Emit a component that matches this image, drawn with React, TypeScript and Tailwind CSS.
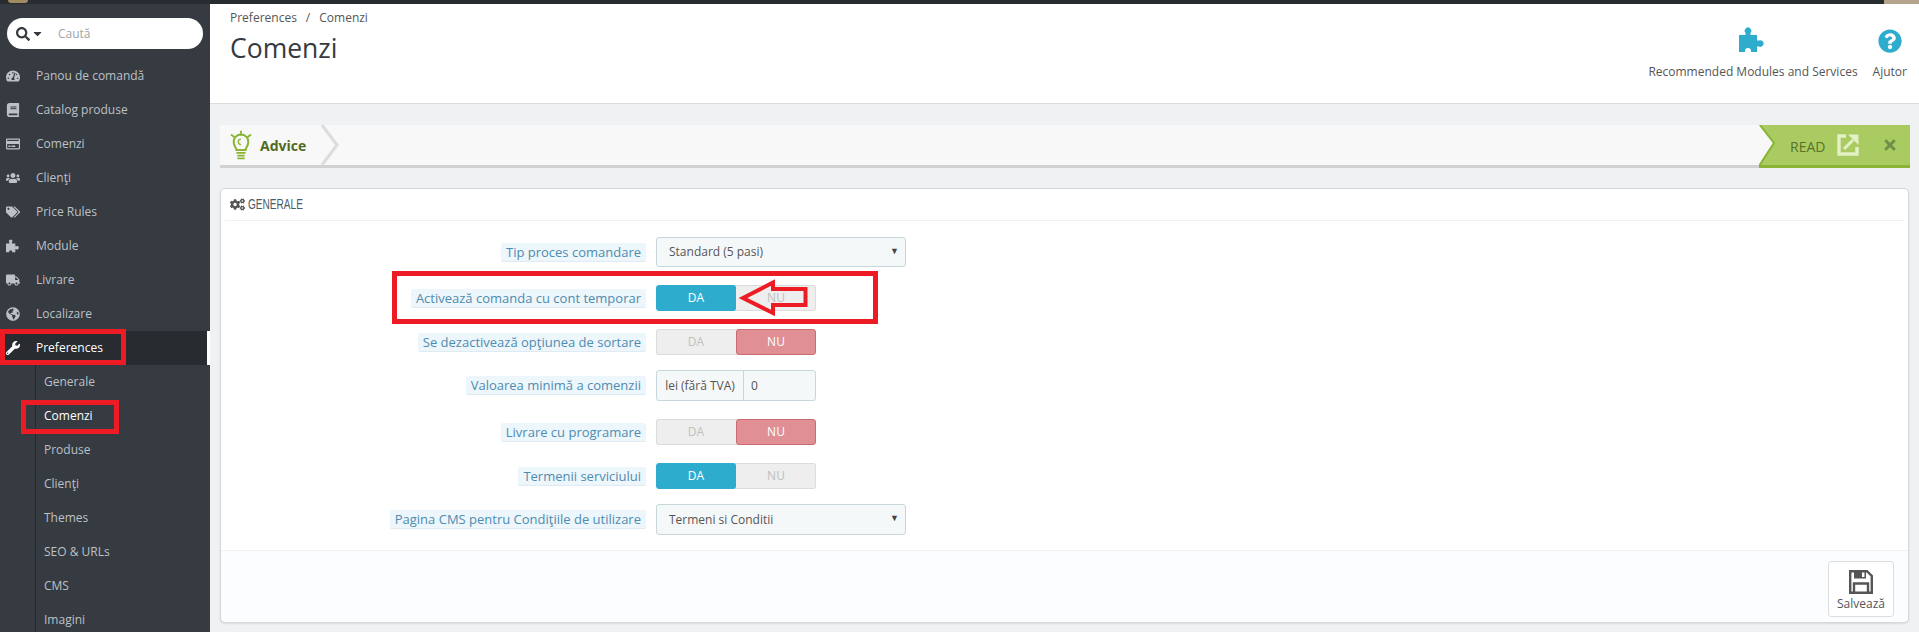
import type { ReactNode } from "react";
import {
  FaBook,
  FaCaretDown,
  FaCogs,
  FaGlobeAmericas,
  FaQuestionCircle,
  FaRegCreditCard,
  FaSearch,
  FaTachometerAlt,
  FaTags,
  FaTimes,
  FaTruck,
  FaUsers,
  FaWrench,
} from "react-icons/fa";

function Puzzle({ className }: { className: string }) {
  return (
    <svg viewBox="0 0 27 26" className={className} fill="currentColor">
      <path d="M0 8H6.5V6A3.3 3.3 0 1 1 11.5 6V8H18V13.5H20A3.3 3.3 0 1 1 20 19.5H18V25H12V24A3 3 0 0 0 6 24V25H0Z" />
    </svg>
  );
}

const menu = [
  { label: "Panou de comandă", icon: <FaTachometerAlt /> },
  { label: "Catalog produse", icon: <FaBook /> },
  { label: "Comenzi", icon: <FaRegCreditCard /> },
  { label: "Clienţi", icon: <FaUsers /> },
  { label: "Price Rules", icon: <FaTags /> },
  { label: "Module", icon: <Puzzle className="h-[14px] w-[14px]" /> },
  { label: "Livrare", icon: <FaTruck /> },
  { label: "Localizare", icon: <FaGlobeAmericas /> },
];

const submenu = ["Generale", "Comenzi", "Produse", "Clienţi", "Themes", "SEO & URLs", "CMS", "Imagini"];

function Sidebar() {
  return (
    <aside className="relative w-[210px] shrink-0 bg-[#363a41] text-[12px]">
      {/* Cautare */}
      <div className="mx-[7px] mt-[14px] mb-[10px] flex h-[31px] w-[196px] items-center rounded-full bg-white pl-[9px] text-[#363a41]">
        <FaSearch className="text-[14px]" />
        <FaCaretDown className="ml-[1px] text-[13px]" />
        <span className="ml-[14px] text-[#a0a5a8]">Caută</span>
      </div>

      {menu.map((item) => (
        <div key={item.label} className="flex h-[34px] items-center text-[#bcc1c7]">
          <span className="flex w-[36px] justify-center pr-[10px] text-[14px]">{item.icon}</span>
          {item.label}
        </div>
      ))}

      <div className="flex h-[34px] items-center border-r-[3px] border-white bg-[#282b30] text-white">
        <span className="flex w-[36px] justify-center pr-[10px] text-[14px]">
          <FaWrench />
        </span>
        Preferences
      </div>

      <div className="ml-[35px] border-l border-[#25282c] pl-[8px]">
        {submenu.map((name) => (
          <div key={name} className={`flex h-[34px] items-center ${name === "Comenzi" ? "text-white" : "text-[#bcc1c7]"}`}>
            {name}
          </div>
        ))}
      </div>

      {/* Marcaje rosii */}
      <div className="absolute top-[325px] left-0 h-[36px] w-[126px] border-[5px] border-[#ed1c24]" />
      <div className="absolute top-[396px] left-[21px] h-[34px] w-[98px] border-[5px] border-[#ed1c24]" />
    </aside>
  );
}

function Header() {
  return (
    <header className="flex h-[100px] shrink-0 justify-between border-b border-[#d9dbdd] bg-white pr-[12px] pl-[20px] text-[#555]">
      <div>
        <div className="mt-[5px] text-[12px] leading-[18px] text-[#555]">
          Preferences<span className="mx-[9px]">/</span>Comenzi
        </div>
        <h1 className="mt-[3px] text-[26.5px] leading-[36px] font-normal text-[#363a41]">Comenzi</h1>
      </div>
      <div className="mt-[23px] flex gap-[15px] text-[12px]">
        <div className="flex flex-col items-center">
          <Puzzle className="h-[26px] w-[27px] text-[#2eacce]" />
          <span className="mt-[10px]">Recommended Modules and Services</span>
        </div>
        <div className="flex flex-col items-center">
          <FaQuestionCircle className="mt-[2px] h-[24px] w-[24px] text-[#2eacce]" />
          <span className="mt-[10px]">Ajutor</span>
        </div>
      </div>
    </header>
  );
}

function Bulb() {
  return (
    <svg viewBox="0 0 24 32" className="h-[31px] w-[22px]" fill="none" stroke="#8ab534">
      <path d="M12 0v5M1 4l4 3M23 4l-4 3" strokeWidth="2" />
      <path d="M7 21c0-3-3-4-3-9a8 8 0 0 1 16 0c0 5-3 6-3 9z" strokeWidth="2.2" />
      <path d="M12 9a3 3 0 0 0 0 6" strokeWidth="1.5" />
      <path d="M7 24h10M8 27h8M8 30h8" strokeWidth="2" />
    </svg>
  );
}

function ReadIcon() {
  return (
    <svg viewBox="0 0 22 22" className="h-[22px] w-[22px]" fill="none" stroke="#e4f0c6">
      <path d="M9 2H2v18h18v-7" strokeWidth="3.4" />
      <path d="M7 15l9-9" strokeWidth="3" />
      <path d="M11 0.5H21.5V11Z" fill="#e4f0c6" stroke="none" />
    </svg>
  );
}

function SaveIcon() {
  return (
    <svg viewBox="0 0 24 24" className="h-[24px] w-[24px] text-[#555]" fill="none" stroke="currentColor">
      <path d="M1.2 1.2H18L22.8 6V22.8H1.2Z" strokeWidth="2.4" />
      <path d="M5 1.5H17V8.5H5Z" fill="currentColor" stroke="none" />
      <path d="M13 2.5H15.5V7H13Z" fill="white" stroke="none" />
      <path d="M5 22V13.5H19V22" strokeWidth="2.4" />
    </svg>
  );
}

function AdviceBar() {
  return (
    <div className="mt-[21px] mr-[9px] ml-[10px] flex h-[43px] border-b-[3px] border-[#d1d1d1] bg-[#f8f8f8]">
      <div className="flex items-center pl-[10px]">
        <Bulb />
        <span className="ml-[8px] text-[14px] font-bold text-[#4f6b1f]">Advice</span>
        <svg viewBox="0 0 18 40" className="ml-[15px] h-[40px] w-[18px]" fill="none" stroke="#dcdcdc" strokeWidth="3">
          <path d="M1 0l15 20L1 40" />
        </svg>
      </div>
      <div className="relative -mb-[3px] ml-auto flex w-[151px] items-center border-b-[3px] border-[#8ab534] bg-[#a9cb62] pt-[3px] pl-[31px] text-[#5a7329]">
        <svg viewBox="0 0 16 43" className="absolute top-0 left-0 h-[43px] w-[16px]" fill="#f8f8f8" stroke="#8ab534" strokeWidth="2">
          <path d="M0 0l14 18L0 40z" stroke="none" />
          <path d="M1 0l14 18L0 41" fill="none" />
        </svg>
        <span className="text-[14px]">READ</span>
        <span className="ml-[12px] -mt-[4px]">
          <ReadIcon />
        </span>
        <FaTimes className="ml-[23px] -mt-[4px] h-[16px] w-[16px] text-[#6f8f47]" />
      </div>
    </div>
  );
}

function Field({ label, children, height, mt }: { label: string; children: ReactNode; height: string; mt: string }) {
  return (
    <div className={`flex items-center gap-[10px] ${height} ${mt}`}>
      <div className="flex w-[425px] shrink-0 justify-end">
        <span className="rounded-[2px] border-b border-[#dfeaf2] bg-[#edf6fb] px-[5px] text-[13px] leading-[18px] text-[#4d8cb0]">{label}</span>
      </div>
      {children}
    </div>
  );
}

function Toggle({ on }: { on: boolean }) {
  return (
    <div className="flex h-[26px] w-[160px] overflow-hidden rounded-[3px] bg-[#eeeeee] text-[12px] shadow-[inset_0_0_0_1px_#dcdcdc]">
      <div className={`flex w-[80px] items-center justify-center rounded-[3px] ${on ? "bg-[#2eacce] text-white" : "text-[#c0c0c0]"}`}>
        DA
      </div>
      <div className={`flex flex-1 items-center justify-center rounded-[3px] ${on ? "text-[#c0c0c0]" : "border border-[#c96b6f] bg-[#e08f95] text-white"}`}>
        NU
      </div>
    </div>
  );
}

function SelectBox({ value }: { value: string }) {
  return (
    <div className="flex h-full w-[250px] items-center justify-between rounded-[3px] border border-[#c7d6db] bg-[#f5f8f9] pr-[6px] pl-[12px] text-[12px] text-[#555]">
      {value}
      <span className="mb-[4px] text-[9px] leading-none text-[#444]">▼</span>
    </div>
  );
}

function Panel() {
  return (
    <section className="relative mx-[10px] mt-[20px] h-[435px] rounded-[5px] border border-[#d3d8db] bg-white shadow-[0_1px_2px_rgba(0,0,0,0.1)]">
      <div className="mx-[4px] flex h-[32px] items-center border-b border-[#eef0f1] pl-[5px] text-[#555]">
        <FaCogs className="text-[15px]" />
        <span className="ml-[3px] origin-left scale-x-[0.72] text-[14px] text-[#4a5a6a]" style={{ fontFamily: "'Liberation Sans', sans-serif" }}>
          GENERALE
        </span>
      </div>

      <div className="h-[329px] pt-[16px]">
        <Field label="Tip proces comandare" height="h-[30px]" mt="mt-0">
          <SelectBox value="Standard (5 pasi)" />
        </Field>
        <Field label="Activează comanda cu cont temporar" height="h-[26px]" mt="mt-[18px]">
          <Toggle on />
        </Field>
        <Field label="Se dezactivează opţiunea de sortare" height="h-[26px]" mt="mt-[18px]">
          <Toggle on={false} />
        </Field>
        <Field label="Valoarea minimă a comenzii" height="h-[31px]" mt="mt-[15px]">
          <div className="flex h-[31px] w-[160px] rounded-[3px] border border-[#c7d6db] bg-[#f5f8f9] text-[12px] text-[#555]">
            <span className="flex w-[87px] items-center justify-center border-r border-[#c7d6db]">lei (fără TVA)</span>
            <span className="flex items-center pl-[7px]">0</span>
          </div>
        </Field>
        <Field label="Livrare cu programare" height="h-[26px]" mt="mt-[18px]">
          <Toggle on={false} />
        </Field>
        <Field label="Termenii serviciului" height="h-[26px]" mt="mt-[18px]">
          <Toggle on />
        </Field>
        <Field label="Pagina CMS pentru Condiţiile de utilizare" height="h-[31px]" mt="mt-[15px]">
          <SelectBox value="Termeni si Conditii" />
        </Field>
      </div>

      <div className="flex h-[72px] justify-end rounded-b-[5px] border-t border-[#eef0f1] bg-[#fcfdfe] pt-[10px] pr-[14px]">
        <button className="flex h-[56px] w-[66px] flex-col items-center rounded-[3px] border border-[#dcdfe1] bg-white pt-[8px] text-[12px] text-[#555]">
          <SaveIcon />
          <span className="mt-[1px] leading-[18px]">Salvează</span>
        </button>
      </div>

      {/* Marcaj si sageata */}
      <div className="absolute top-[82px] left-[171px] h-[53px] w-[486px] border-[5px] border-[#ed1c24]" />
      <svg viewBox="0 0 72 38" className="absolute top-[90px] left-[517px] h-[38px] w-[72px]" fill="none" stroke="#ed1c24" strokeWidth="4">
        <path d="M5 19L35 3.5v6.5h32.5v16H35v8z" />
      </svg>
    </section>
  );
}

export default function App() {
  return (
    <div className="relative flex h-[632px] flex-col overflow-hidden bg-[#eff1f2]" style={{ fontFamily: "'Open Sans', sans-serif" }}>
      <div className="relative h-[4px] shrink-0 bg-[#282b30]">
        <div className="absolute top-0 left-[8px] h-[3px] w-[20px] rounded-b-full bg-[#a08a60]" />
        <div className="absolute top-0 right-0 h-[4px] w-[35px] bg-[#b5a48c]" />
      </div>
      <div className="flex min-h-0 flex-1">
        <Sidebar />
        <main className="flex min-w-0 flex-1 flex-col">
          <Header />
          <AdviceBar />
          <Panel />
        </main>
      </div>
    </div>
  );
}
